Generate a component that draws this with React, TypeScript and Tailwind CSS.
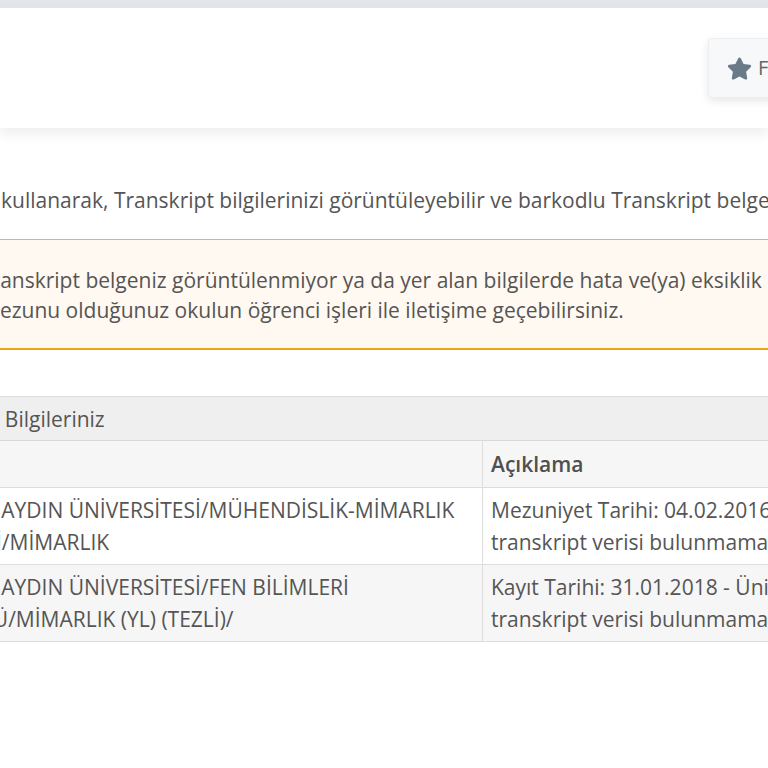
import React from "react";
import { FaStar } from "react-icons/fa";

export default function App() {
  return (
    <div className="w-[768px] h-[768px] overflow-hidden bg-white text-[#555] font-['Open_Sans',_'Liberation_Sans',_sans-serif] text-[21px]">
      <div className="h-2 bg-[#e2e6ea]" />
      <header className="relative z-10 h-[120px] bg-white shadow-[0_6px_12px_rgba(0,0,0,0.07)] flex items-center justify-end">
        <button className="shrink-0 w-[200px] h-[60px] -mr-[140px] flex items-center gap-[6px] pl-[18px] bg-[#f7f8f9] border border-[#eceef0] rounded-[4px] shadow-[0_3px_8px_rgba(0,0,0,0.1)] text-[#666] text-[20px] whitespace-nowrap">
          <FaStar className="w-[25px] h-[25px] text-[#6b7a89]" />
          <span>Favorilere Ekle</span>
        </button>
      </header>

      <main>
        <p className="mt-[57px] leading-[30px] whitespace-nowrap pl-[1px]">
          kullanarak, Transkript bilgilerinizi görüntüleyebilir ve barkodlu Transkript belgenizi oluşturabilirsiniz.
        </p>

        <div className="mt-6 border-t border-t-[#f3b04c] border-b-2 border-b-[#f0a50f] bg-[#fff9f1] pt-[25px] pb-[23px] leading-[30px] whitespace-nowrap">
          <div className="-ml-[20px]">
            Transkript belgeniz görüntülenmiyor ya da yer alan bilgilerde hata ve(ya) eksiklik olduğunu düşünüyorsanız
          </div>
          <div className="-ml-[19px]">
            Mezunu olduğunuz okulun öğrenci işleri ile iletişime geçebilirsiniz.
          </div>
        </div>

        <section className="mt-[46px] -ml-[111px] w-[1000px] border border-[#dddddd]">
          <div className="bg-[#efefef] border-b border-b-[#d9d9d9] px-2 pt-[7px] pb-[5px] leading-[31px] whitespace-nowrap">
            Mezuniyet Bilgileriniz
          </div>
          <div className="grid grid-cols-[592px_1fr] whitespace-nowrap leading-[32px]">
            <div className="bg-[#f6f6f6] px-2 py-[7px] border-b border-b-[#dddddd] h-[47px]" />
            <div className="bg-[#f6f6f6] px-2 py-[7px] border-b border-b-[#dddddd] border-l border-l-[#dddddd] font-semibold text-[#4f4f4f]">
              Açıklama
            </div>

            <div className="bg-white px-2 py-[6px] border-b border-b-[#dddddd]">
              <div>İSTANBUL AYDIN ÜNİVERSİTESİ/MÜHENDİSLİK-MİMARLIK</div>
              <div>FAKÜLTESİ/MİMARLIK</div>
            </div>
            <div className="bg-white px-2 py-[6px] border-b border-b-[#dddddd] border-l border-l-[#dddddd]">
              <div>Mezuniyet Tarihi: 04.02.2016 - Üniversite tarafından</div>
              <div>transkript verisi bulunmamaktadır.</div>
            </div>

            <div className="bg-[#f6f6f6] px-2 py-[6px]">
              <div>İSTANBUL AYDIN ÜNİVERSİTESİ/FEN BİLİMLERİ</div>
              <div>ENSTİTÜSÜ/MİMARLIK (YL) (TEZLİ)/</div>
            </div>
            <div className="bg-[#f6f6f6] px-2 py-[6px] border-l border-l-[#dddddd]">
              <div>Kayıt Tarihi: 31.01.2018 - Üniversite tarafından</div>
              <div>transkript verisi bulunmamaktadır.</div>
            </div>
          </div>
        </section>
      </main>
    </div>
  );
}
